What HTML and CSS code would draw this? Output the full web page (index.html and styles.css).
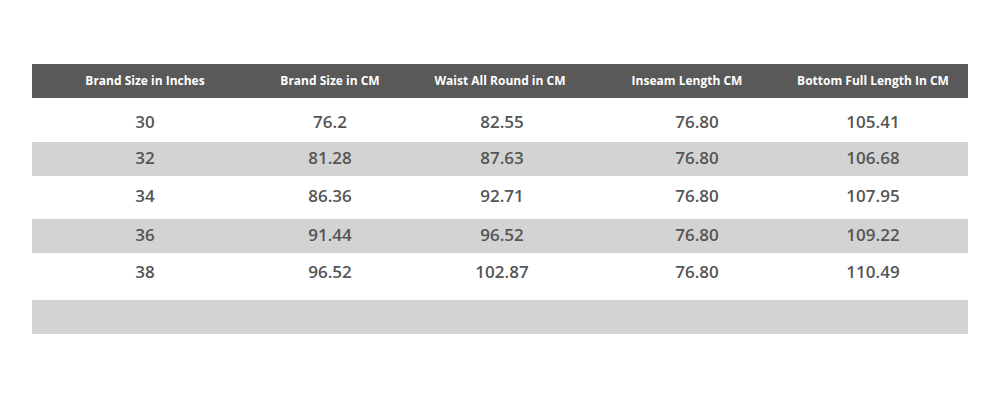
FILE: index.html
```html
<!DOCTYPE html>
<html lang="en">
<head>
<meta charset="utf-8">
<title>Size Chart</title>
<link rel="stylesheet" href="styles.css">
</head>
<body>
<div class="chart">
  <div class="row head">
    <div class="cell">Brand Size in Inches</div>
    <div class="cell">Brand Size in CM</div>
    <div class="cell">Waist All Round in CM</div>
    <div class="cell">Inseam Length CM</div>
    <div class="cell">Bottom Full Length In CM</div>
  </div>
  <div class="row r1">
    <div class="cell">30</div>
    <div class="cell">76.2</div>
    <div class="cell">82.55</div>
    <div class="cell inseam">76.80</div>
    <div class="cell">105.41</div>
  </div>
  <div class="row r2 shade">
    <div class="cell">32</div>
    <div class="cell">81.28</div>
    <div class="cell">87.63</div>
    <div class="cell inseam">76.80</div>
    <div class="cell">106.68</div>
  </div>
  <div class="row r3">
    <div class="cell">34</div>
    <div class="cell">86.36</div>
    <div class="cell">92.71</div>
    <div class="cell inseam">76.80</div>
    <div class="cell">107.95</div>
  </div>
  <div class="row r4 shade">
    <div class="cell">36</div>
    <div class="cell">91.44</div>
    <div class="cell">96.52</div>
    <div class="cell inseam">76.80</div>
    <div class="cell">109.22</div>
  </div>
  <div class="row r5">
    <div class="cell">38</div>
    <div class="cell">96.52</div>
    <div class="cell">102.87</div>
    <div class="cell inseam">76.80</div>
    <div class="cell">110.49</div>
  </div>
  <div class="row r6 shade"></div>
</div>
</body>
</html>
```
FILE: styles.css
```css
html, body {
  margin: 0;
  padding: 0;
  background: #ffffff;
}

.chart {
  width: 936px;
  margin: 64px 0 0 32px;
}

.row {
  display: grid;
  grid-template-columns: 226px 144px 200px 176px 1fr;
  align-items: center;
  box-sizing: border-box;
  font-family: "Open Sans", "Liberation Sans", sans-serif;
  font-weight: 600;
  font-size: 17px;
  line-height: 20px;
  color: #555555;
}

.cell {
  text-align: center;
  white-space: nowrap;
}

.head {
  height: 34px;
  background: #595959;
  color: #ffffff;
  font-weight: 700;
  font-size: 12px;
  line-height: 16px;
}

.head .cell:nth-child(3) {
  padding-right: 4px;
}

.head .cell:nth-child(4) {
  padding-right: 6px;
}

.inseam {
  padding-left: 14px;
}

.shade {
  background: #d3d3d3;
}

.r1 { height: 44px; padding-top: 4px; }
.r2 { height: 34px; padding-bottom: 2px; }
.r3 { height: 43px; padding-bottom: 3px; }
.r4 { height: 34px; padding-bottom: 3px; }
.r5 { height: 47px; padding-bottom: 10px; }
.r6 { height: 34px; }
```
